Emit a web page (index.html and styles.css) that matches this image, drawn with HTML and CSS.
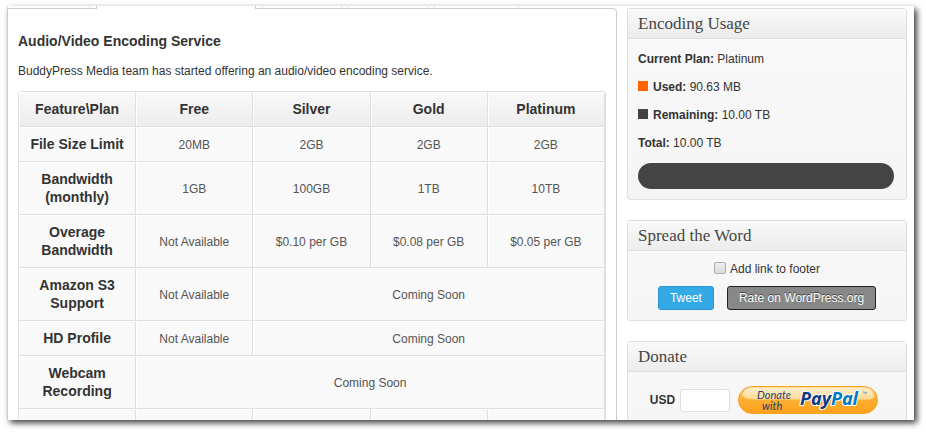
FILE: index.html
```html
<!DOCTYPE html>
<html lang="en">
<head>
  <meta charset="UTF-8">
  <meta name="viewport" content="width=device-width, initial-scale=1.0">
  <title>Audio/Video Encoding Service</title>
  <link rel="stylesheet" href="styles.css">
</head>
<body>

  <div class="window">
    <main class="main">
      <div class="tabs">
        <span class="tab first"></span>
        <span class="tab active"></span>
        <span class="tab medium"></span>
        <span class="tab medium"></span>
        <span class="tab"></span>
      </div>

      <div class="panel">
        <h2>Audio/Video Encoding Service</h2>
        <p>BuddyPress Media team has started offering an audio/video encoding service.</p>

        <table class="plans">
          <thead>
            <tr>
              <th scope="col">Feature\Plan</th>
              <th scope="col">Free</th>
              <th scope="col">Silver</th>
              <th scope="col">Gold</th>
              <th scope="col">Platinum</th>
            </tr>
          </thead>
          <tbody>
            <tr>
              <th scope="row">File Size Limit</th>
              <td>20MB</td>
              <td>2GB</td>
              <td>2GB</td>
              <td>2GB</td>
            </tr>
            <tr>
              <th scope="row">Bandwidth (monthly)</th>
              <td>1GB</td>
              <td>100GB</td>
              <td>1TB</td>
              <td>10TB</td>
            </tr>
            <tr>
              <th scope="row">Overage Bandwidth</th>
              <td>Not Available</td>
              <td>$0.10 per GB</td>
              <td>$0.08 per GB</td>
              <td>$0.05 per GB</td>
            </tr>
            <tr>
              <th scope="row">Amazon S3 Support</th>
              <td>Not Available</td>
              <td colspan="3">Coming Soon</td>
            </tr>
            <tr>
              <th scope="row">HD Profile</th>
              <td>Not Available</td>
              <td colspan="3">Coming Soon</td>
            </tr>
            <tr>
              <th scope="row">Webcam Recording</th>
              <td colspan="4">Coming Soon</td>
            </tr>
            <tr class="empty">
              <td></td>
              <td></td>
              <td></td>
              <td></td>
              <td></td>
            </tr>
          </tbody>
        </table>
      </div>
    </main>

    <aside class="sidebar">
      <section class="box">
        <h3>Encoding Usage</h3>
        <div class="inside usage">
          <p><strong>Current Plan:</strong> Platinum</p>
          <p><span class="swatch used"></span><strong>Used:</strong> 90.63 MB</p>
          <p><span class="swatch remaining"></span><strong>Remaining:</strong> 10.00 TB</p>
          <p><strong>Total:</strong> 10.00 TB</p>
          <div class="usage-bar"></div>
        </div>
      </section>

      <section class="box">
        <h3>Spread the Word</h3>
        <div class="inside spread">
          <div class="check">
            <input type="checkbox" id="addLink">
            <label for="addLink">Add link to footer</label>
          </div>
          <div class="buttons">
            <button type="button" class="tweet">Tweet</button>
            <button type="button" class="rate">Rate on WordPress.org</button>
          </div>
        </div>
      </section>

      <section class="box">
        <h3>Donate</h3>
        <form class="inside donate">
          <label for="amount">USD</label>
          <input type="text" id="amount" name="amount">
          <button type="button" class="paypal">
            <svg width="140" height="28" viewBox="0 0 140 28">
              <defs>
                <linearGradient id="gold" x1="0" y1="0" x2="0" y2="1">
                  <stop offset="0" stop-color="#fdc767"/>
                  <stop offset="0.6" stop-color="#fcab2c"/>
                  <stop offset="1" stop-color="#fda11c"/>
                </linearGradient>
                <linearGradient id="shine" x1="0" y1="0" x2="0" y2="1">
                  <stop offset="0" stop-color="#fff0cf"/>
                  <stop offset="1" stop-color="#fdd892"/>
                </linearGradient>
              </defs>
              <rect x="0.5" y="0.5" width="139" height="27" rx="13.5" fill="url(#gold)" stroke="#f5a42c"/>
              <path d="M14 1.5H126C132 1.5 135 5 136 9C136 12 134 13.5 129 13.5H21C10 13.5 7 12 4 9C6 4 9 1.5 14 1.5Z" fill="url(#shine)"/>
              <g class="donate-with">
                <text x="19" y="13">Donate</text>
                <text x="24" y="24">with</text>
              </g>
              <text class="brand" x="62" y="19"><tspan fill="#113984">Pay</tspan><tspan fill="#0079c8">Pal</tspan></text>
              <text class="mark" x="124" y="9">™</text>
            </svg>
          </button>
        </form>
      </section>
    </aside>
  </div>

</body>
</html>
```
FILE: styles.css
```css
body {
  margin: 0;
  padding: 6px 12px 12px 7px;
  height: 100vh;
  box-sizing: border-box;
  overflow: hidden;
  background-color: #fff;
  color: #333;
  font-family: "Liberation Sans", Arial, sans-serif;
  font-size: 12px;
  line-height: 18px;
}

h2, h3, p {
  margin: 0;
}

.window {
  display: flex;
  gap: 10px;
  height: 100%;
  padding-right: 7px;
  box-sizing: border-box;
  overflow: hidden;
  background-color: #fff;
}

body::after {
  content: "";
  position: absolute;
  inset: 6px 12px 12px 7px;
  box-shadow: 3px 3px 6px rgba(0, 0, 0, 0.75);
  pointer-events: none;
}

.main {
  flex: 1;
}

/* bottom edge of the tab row */
.tabs {
  display: flex;
  gap: 6px;
  height: 2px;
}

.tab {
  width: 85px;
  box-sizing: border-box;
  border: solid #dfdfdf;
  border-width: 0 1px;
}

.tab.first {
  width: 83px;
}

.tab.medium {
  width: 80px;
}

.tab.active {
  width: 160px;
  height: 3px;
  border-color: #ccc;
  background-color: #fff;
  z-index: 1;
}

.panel {
  padding: 23px 10px 0;
  border: 1px solid #ccc;
  border-radius: 0 4px 0 0;
}

.panel h2 {
  margin-bottom: 12px;
  font-size: 14px;
}

.plans {
  width: 100%;
  margin-top: 11px;
  table-layout: fixed;
  border: 1px solid #dfdfdf;
  border-radius: 3px;
  border-spacing: 0;
  background-color: #f9f9f9;
}

.plans th,
.plans td {
  padding: 7px 7px 8px;
  border: solid #dfdfdf;
  border-width: 1px 1px 1px 0;
  border-top-color: #fff;
  box-shadow: inset 1px 0 #fff;
  text-align: center;
}

.plans th {
  font-size: 14px;
}

.plans td {
  padding: 8px 7px 7px;
  color: #555;
}

.plans thead th {
  background-image: linear-gradient(#f9f9f9, #ececec);
}

.plans .empty td {
  height: 18px;
}

.sidebar {
  width: 280px;
  padding-top: 2px;
}

.box {
  margin-bottom: 20px;
  border: 1px solid #dfdfdf;
  border-radius: 3px;
  background-image: linear-gradient(#f9f9f9, #f5f5f5);
}

.box h3 {
  padding: 6px 10px 5px;
  border-bottom: 1px solid #dfdfdf;
  background-image: linear-gradient(#f9f9f9, #ececec);
  color: #464646;
  font-family: Georgia, "Liberation Serif", serif;
  font-size: 17px;
  font-weight: normal;
}

.usage {
  padding: 11px 12px 10px 10px;
}

.usage p {
  margin-bottom: 10px;
}

.swatch {
  display: inline-block;
  width: 10px;
  height: 10px;
  margin-right: 5px;
}

.used {
  background-color: #ff6200;
}

.remaining {
  background-color: #444;
}

.usage-bar {
  height: 26px;
  margin-top: 11px;
  border-radius: 13px;
  background-color: #444;
}

.spread {
  padding: 9px 0 10px;
}

.check {
  display: flex;
  justify-content: center;
  gap: 4px;
  margin-bottom: 8px;
}

.check input {
  appearance: none;
  width: 12px;
  height: 12px;
  margin: 2px 0;
  box-sizing: border-box;
  border: 1px solid #aaa;
  border-radius: 2px;
  background-image: linear-gradient(#eee, #ddd);
}

.buttons {
  display: flex;
  justify-content: center;
  gap: 13px;
}

.buttons button {
  padding: 2px 11px;
  border: 1px solid #2b94d6;
  border-radius: 3px;
  background-color: #33aae6;
  color: #fff;
  font: inherit;
  line-height: 18px;
}

.buttons .rate {
  border-color: #222;
  background-color: #888;
  text-shadow: 0 -1px 0 #444;
}

.donate {
  display: flex;
  align-items: center;
  justify-content: center;
  padding: 14px 6px 14px 0;
}

.donate label {
  font-weight: bold;
}

.donate input {
  width: 50px;
  height: 23px;
  margin: 0 8px 0 5px;
  box-sizing: border-box;
  border: 1px solid #dfdfdf;
  border-radius: 3px;
}

.paypal {
  padding: 0;
  border: 0;
  background: none;
}

.paypal svg {
  display: block;
}

.donate-with {
  font-family: Lato, sans-serif;
  font-size: 11px;
  font-style: italic;
  fill: #1d3d70;
}

.brand {
  font-family: "Noto Sans", sans-serif;
  font-size: 18px;
  font-style: italic;
  font-weight: bold;
  stroke: #fff;
  stroke-width: 2px;
  paint-order: stroke;
}

.mark {
  font-size: 5px;
  fill: #0079c8;
}
```
